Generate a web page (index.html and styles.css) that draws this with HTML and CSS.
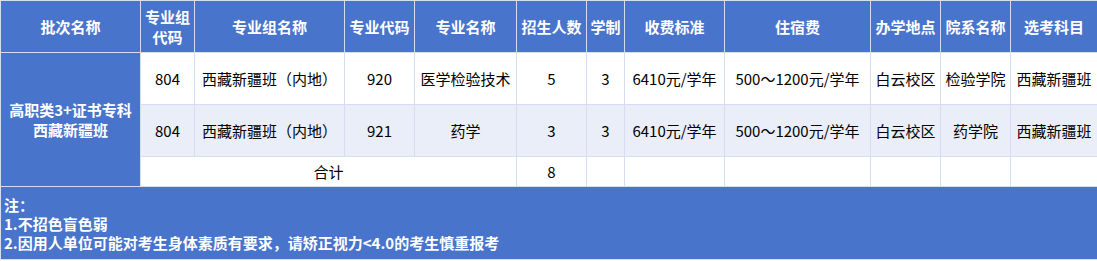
FILE: index.html
```html
<!DOCTYPE html>
<html lang="zh-CN">
<head>
<meta charset="utf-8">
<title>招生计划</title>
<link rel="stylesheet" href="styles.css">
</head>
<body>
<table class="plan">
  <colgroup>
    <col class="c1"><col class="c2"><col class="c3"><col class="c4"><col class="c5"><col class="c6">
    <col class="c7"><col class="c8"><col class="c9"><col class="c10"><col class="c11"><col class="c12">
  </colgroup>
  <thead>
    <tr class="head">
      <th>批次名称</th>
      <th>专业组<br>代码</th>
      <th>专业组名称</th>
      <th>专业代码</th>
      <th>专业名称</th>
      <th>招生人数</th>
      <th>学制</th>
      <th>收费标准</th>
      <th>住宿费</th>
      <th>办学地点</th>
      <th>院系名称</th>
      <th>选考科目</th>
    </tr>
  </thead>
  <tbody>
    <tr class="row odd">
      <td class="batch" rowspan="3">高职类3+证书专科<br>西藏新疆班</td>
      <td>804</td>
      <td>西藏新疆班（内地）</td>
      <td>920</td>
      <td>医学检验技术</td>
      <td>5</td>
      <td>3</td>
      <td>6410元/学年</td>
      <td>500～1200元/学年</td>
      <td>白云校区</td>
      <td>检验学院</td>
      <td>西藏新疆班</td>
    </tr>
    <tr class="row even">
      <td>804</td>
      <td>西藏新疆班（内地）</td>
      <td>921</td>
      <td>药学</td>
      <td>3</td>
      <td>3</td>
      <td>6410元/学年</td>
      <td>500～1200元/学年</td>
      <td>白云校区</td>
      <td>药学院</td>
      <td>西藏新疆班</td>
    </tr>
    <tr class="total">
      <td colspan="4">合计</td>
      <td>8</td>
      <td></td><td></td><td></td><td></td><td></td><td></td>
    </tr>
    <tr class="note">
      <td colspan="12">注：<br>1.不招色盲色弱<br>2.因用人单位可能对考生身体素质有要求，请矫正视力&lt;4.0的考生慎重报考</td>
    </tr>
  </tbody>
</table>
</body>
</html>
```
FILE: styles.css
```css
html, body {
  margin: 0;
  padding: 0;
  background: #ffffff;
}

body {
  font-family: "Noto Sans CJK SC", "Microsoft YaHei", sans-serif;
  font-size: 15px;
  color: #000000;
}

.plan {
  width: 1097px;
  table-layout: fixed;
  border-collapse: collapse;
  border: 1px solid #d6ddf0;
}

.c1 { width: 140px; }
.c2 { width: 54px; }
.c3 { width: 150px; }
.c4 { width: 70px; }
.c5 { width: 102px; }
.c6 { width: 70px; }
.c7 { width: 38px; }
.c8 { width: 100px; }
.c9 { width: 146px; }
.c10 { width: 70px; }
.c11 { width: 70px; }
.c12 { width: 87px; }

.plan th,
.plan td {
  border: 1px solid #d6ddf0;
  padding: 0;
  text-align: center;
  vertical-align: middle;
  line-height: 20px;
  white-space: nowrap;
  overflow: hidden;
}

.head th {
  height: 51px;
  background: #4874cb;
  color: #ffffff;
  font-weight: bold;
  font-size: 15px;
}

.row td {
  height: 51px;
}

.odd td {
  background: #ffffff;
}

.even td {
  background: #e9eef8;
}

.plan td.batch {
  background: #4874cb;
  color: #ffffff;
  font-weight: bold;
}

.total td {
  height: 29px;
  background: #ffffff;
}

.note td {
  height: 72px;
  background: #4874cb;
  color: #ffffff;
  font-weight: bold;
  text-align: left;
  padding-left: 3px;
  line-height: 19px;
}
```
